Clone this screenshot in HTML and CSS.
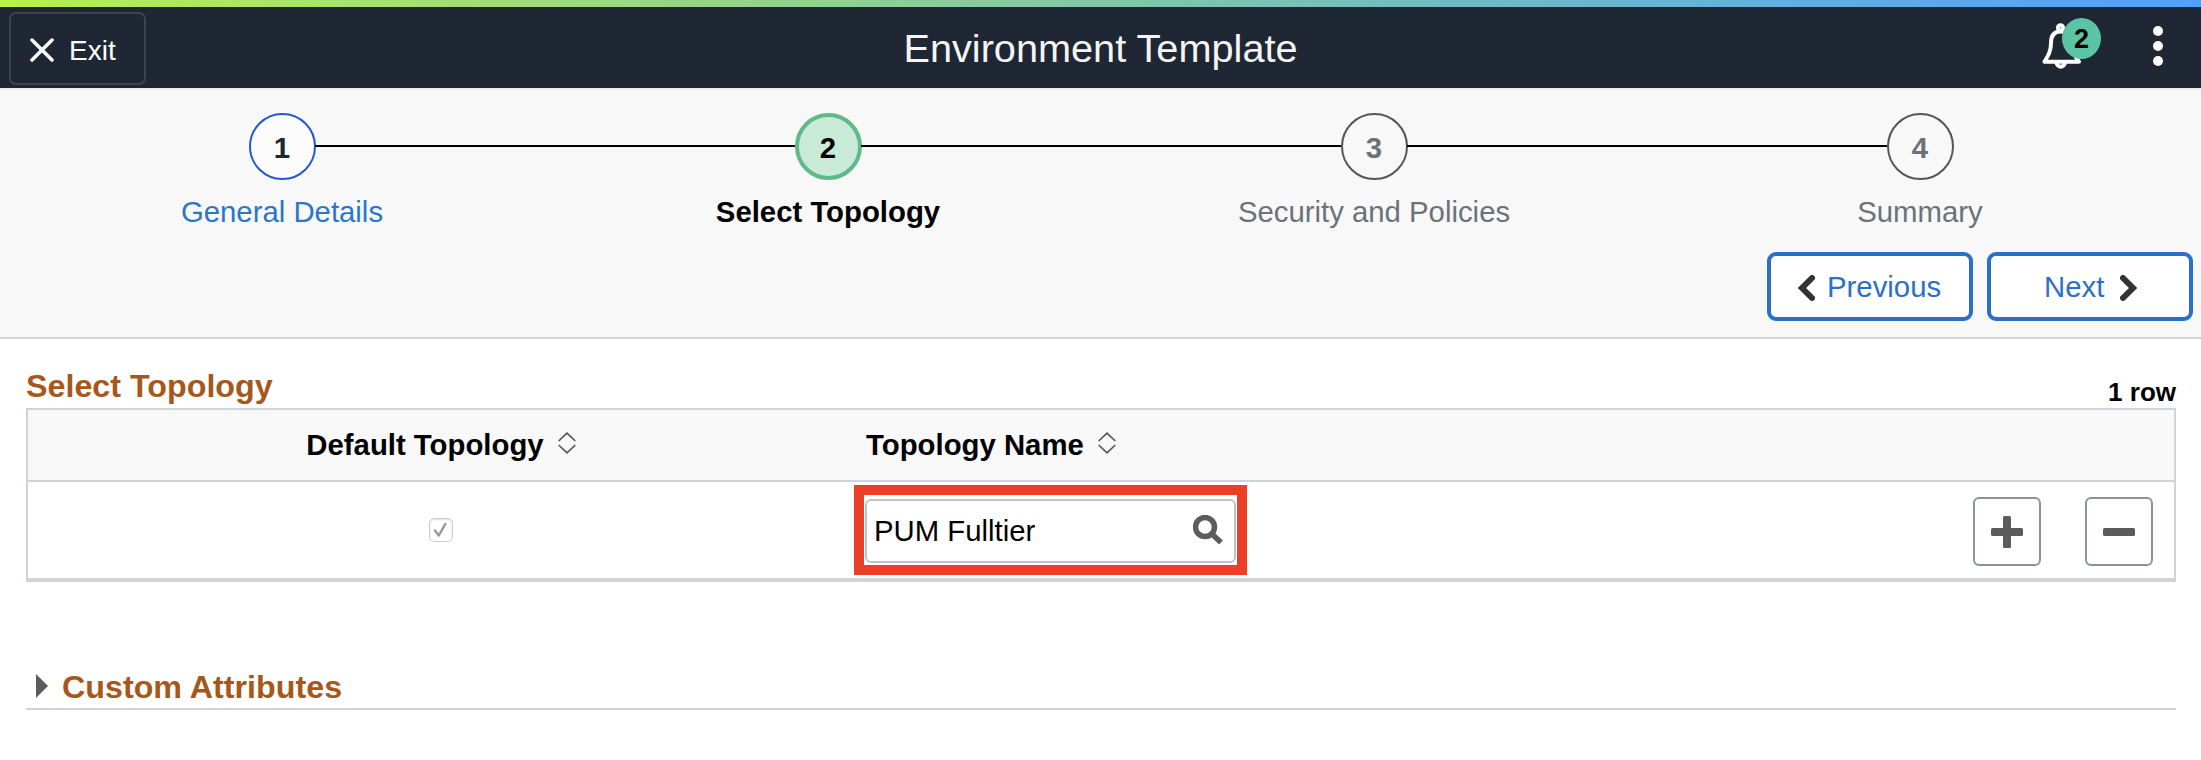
FILE: index.html
```html
<!DOCTYPE html>
<html lang="en">
<head>
<meta charset="utf-8">
<title>Environment Template</title>
<link rel="stylesheet" href="styles.css">
</head>
<body>
<div class="accent"></div>
<header class="topbar">
  <button class="exit" type="button">
    <svg class="exit-icon" viewBox="0 0 24 24"><path d="M2 2L22 22M22 2L2 22"/></svg>
    <span>Exit</span>
  </button>
  <h1 class="title">Environment Template</h1>
  <div class="tools">
    <div class="bell">
      <svg class="bell-icon" viewBox="0 0 40 46"><path d="M2.500 38.700H37C32 32 29.500 27 29.500 19C29.500 12 25 8.500 18.500 8.500C12 8.500 9 13 9 20C9 28 6.500 32 2.500 38.700Z"/><circle cx="18.500" cy="4.800" r="2.600"/><path d="M14.500 39.500C15 45 22.500 45 23 39.500"/></svg>
      <span class="badge">2</span>
    </div>
    <svg class="dots" viewBox="0 0 10 42"><circle cx="5" cy="6" r="5"/><circle cx="5" cy="21" r="5"/><circle cx="5" cy="36" r="5"/></svg>
  </div>
</header>
<section class="wizard">
  <ol class="steps">
    <li class="step visited"><span class="num">1</span><span class="label">General Details</span></li>
    <li class="step current"><span class="num">2</span><span class="label">Select Topology</span></li>
    <li class="step"><span class="num">3</span><span class="label">Security and Policies</span></li>
    <li class="step"><span class="num">4</span><span class="label">Summary</span></li>
  </ol>
  <div class="nav">
    <button class="nav-btn previous" type="button"><svg class="chevron" viewBox="0 0 17 26"><path d="M14 3L4 13L14 23"/></svg><span>Previous</span></button>
    <button class="nav-btn next" type="button"><span>Next</span><svg class="chevron" viewBox="0 0 17 26"><path d="M3 3L13 13L3 23"/></svg></button>
  </div>
</section>
<main class="content">
  <div class="grid-head"><h2 class="heading">Select Topology</h2><span class="count">1 row</span></div>
  <div class="grid">
    <div class="row head">
      <div class="cell center"><span>Default Topology</span><svg class="sort" viewBox="0 0 18 22"><path d="M.7 9L9 1.200L17.300 9M.7 13L9 20.800L17.300 13"/></svg></div>
      <div class="cell name"><span>Topology Name</span><svg class="sort" viewBox="0 0 18 22"><path d="M.7 9L9 1.200L17.300 9M.7 13L9 20.800L17.300 13"/></svg></div>
      <div class="cell"></div>
    </div>
    <div class="row body">
      <div class="cell center"><span class="check"><svg viewBox="0 0 20 20"><path d="M4.500 10.500L8 15L14 4.500"/></svg></span></div>
      <div class="cell"><div class="highlight"><div class="lookup"><span>PUM Fulltier</span><svg class="search" viewBox="0 0 30 30"><circle cx="12" cy="12" r="9.500"/><path d="M19 19L28 27.500"/></svg></div></div></div>
      <div class="cell actions">
        <button class="square" type="button" aria-label="Add"><svg viewBox="0 0 32 32"><rect x="12" width="8" height="32" rx="1.500"/><rect y="12" width="32" height="8" rx="1.500"/></svg></button>
        <button class="square" type="button" aria-label="Remove"><svg viewBox="0 0 32 32"><rect y="12" width="32" height="8" rx="1.500"/></svg></button>
      </div>
    </div>
  </div>
  <div class="collapsed"><span class="triangle"></span><h2 class="heading">Custom Attributes</h2></div>
</main>
</body>
</html>
```
FILE: styles.css
```css
* { box-sizing: border-box; }
body { margin: 0; background: #fff; color: #000; font: 29.33px "Liberation Sans", Arial, sans-serif; }
button { font: inherit; padding: 0; }
svg { display: block; flex: none; }
h1, h2, ol { margin: 0; padding: 0; }

.accent { height: 7px; background: linear-gradient(90deg, #b8f04c, #7cc3b0 55%, #50a0ff); }
.topbar { height: 81px; background: #1e2733; display: grid; grid-template-columns: 1fr auto 1fr; }
.exit { width: 137px; height: 73px; margin: 5px 0 0 9px; border: 2px solid #3c444d; border-radius: 7px; background: none; color: #fff; font-size: 28px; line-height: 32px; display: flex; align-items: flex-start; padding: 21px 0 0 19px; gap: 15px; }
.exit-icon { width: 24px; height: 24px; margin-top: 3px; fill: none; stroke: #fff; stroke-width: 3.5; stroke-linecap: round; }
.title { color: #f5f5f5; font-size: 39.7px; font-weight: 400; line-height: 82px; }
.tools { display: flex; justify-content: flex-end; padding-right: 38px; gap: 52px; }
.bell { position: relative; width: 59px; height: 50px; margin-top: 11px; }
.bell-icon { width: 40px; height: 46px; margin-top: 5px; fill: none; stroke: #fff; stroke-width: 4; stroke-linejoin: round; }
.badge { position: absolute; top: 0; right: 0; width: 39px; height: 41px; border-radius: 50%; background: #5bc4a5; color: #000; font-size: 27px; font-weight: 700; line-height: 43px; text-align: center; }
.dots { width: 10px; height: 42px; margin-top: 18px; fill: #fff; }

.wizard { height: 251px; background: #f8f8f8; border-top: 2px solid #eeeff1; border-bottom: 2px solid #d1d5da; padding: 23px 8px 0; }
.steps { list-style: none; display: grid; grid-template-columns: repeat(4, 1fr); padding-left: 1px; }
.step { position: relative; display: flex; flex-direction: column; align-items: center; color: #6b727b; }
.step + .step::before { content: ""; position: absolute; top: 32px; right: calc(50% + 33px); width: calc(100% - 66px); height: 2px; background: #000; }
.num { width: 67px; height: 67px; border: 2px solid #565656; border-radius: 50%; font-weight: 700; line-height: 66px; text-align: center; }
.label { line-height: 34px; margin-top: 15px; }
.visited { color: #2a77c9; }
.visited .num { border-color: #2159d3; background: #fcfcfc; color: #1e2733; }
.current { color: #000; font-weight: 700; }
.current .num { border: 4px solid #61b987; background: #c9ead7; line-height: 62px; }
.nav { display: flex; justify-content: flex-end; gap: 14px; margin-top: 23px; }
.nav-btn { width: 206px; height: 69px; border: 4px solid #2a70c8; border-radius: 9px; background: #fff; color: #2a70c8; display: flex; align-items: center; line-height: 33px; }
.previous { padding-left: 27px; gap: 12px; }
.next { padding-left: 53px; gap: 16px; }
.chevron { width: 17px; height: 26px; margin-top: 3px; fill: none; stroke: #333; stroke-width: 6; stroke-linecap: round; }

.content { padding: 0 25px 0 26px; }
.grid-head { height: 69px; display: flex; justify-content: space-between; padding-top: 29px; }
.heading { color: #a6571c; font-size: 32.26px; font-weight: 700; line-height: 36px; }
.count { font-size: 26px; font-weight: 700; line-height: 30px; padding-top: 9px; }
.grid { border: 2px solid #cfd3da; border-bottom-width: 4px; }
.row { display: grid; grid-template-columns: 826px 400px 1fr; }
.head { height: 72px; background: #f8f8f8; border-bottom: 2px solid #cfd3da; font-weight: 700; }
.body { height: 96px; }
.cell { display: flex; align-items: center; }
.center { justify-content: center; }
.head .cell { gap: 14px; }
.head .cell span { margin-top: -1px; }
.name { padding-left: 12px; }
.sort { width: 18px; height: 22px; margin-top: -5px; fill: none; stroke: #555; stroke-width: 1.6; }
.check { width: 24px; height: 24px; border: 1px solid #ccc; border-radius: 5px; background: #fff; box-shadow: inset 0 1px 2px #ddd; }
.check svg { width: 22px; height: 22px; fill: none; stroke: #999; stroke-width: 2.2; stroke-linecap: round; stroke-linejoin: round; }
.highlight { width: 393px; height: 90px; border: 10px solid #ea4025; padding: 4px 1px 2px; }
.lookup { height: 64px; border: 2px solid #bcc5ce; border-radius: 6px; display: flex; justify-content: space-between; align-items: center; padding: 0 11px 0 7px; }
.search { width: 30px; height: 30px; margin-top: -2px; fill: none; stroke: #5c5c5c; stroke-width: 5.5; }
.actions { justify-content: flex-end; gap: 44px; padding: 2px 21px 0 0; }
.square { width: 68px; height: 69px; border: 2px solid #8a929c; border-radius: 6px; background: #fff; display: flex; align-items: center; justify-content: center; }
.square svg { width: 32px; height: 32px; fill: #5c5c5c; margin-top: 1px; }
.collapsed { height: 41px; margin-top: 87px; border-bottom: 2px solid #cfd3da; display: flex; align-items: flex-start; padding: 0 0 0 10px; gap: 14px; }
.triangle { width: 12px; height: 24px; margin-top: 5px; background: #5c5c5c; clip-path: polygon(0 0, 100% 50%, 0 100%); }
```
